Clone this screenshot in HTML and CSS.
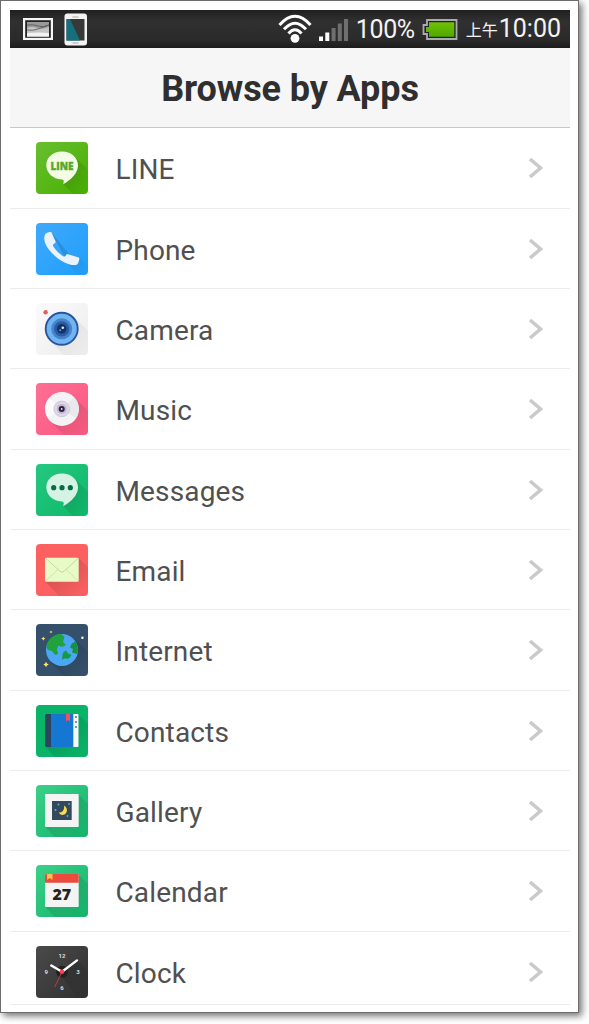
FILE: index.html
```html
<!DOCTYPE html>
<html lang="en">
<head>
    <meta charset="UTF-8">
    <meta name="viewport" content="width=device-width, initial-scale=1.0">
    <title>Browse by Apps</title>
    <link rel="stylesheet" href="styles.css">
</head>
<body>
    <!-- Shared gradients and shapes -->
    <svg class="defs" width="0" height="0">
        <defs>
            <linearGradient id="shade" x1="0" y1="0" x2="1" y2="1">
                <stop offset="0.25" stop-color="#000" stop-opacity="0.15"/>
                <stop offset="0.9" stop-color="#000" stop-opacity="0.01"/>
            </linearGradient>
            <linearGradient id="gGreen" x1="0" y1="0" x2="1" y2="1"><stop offset="0" stop-color="#68be31"/><stop offset="1" stop-color="#48b000"/></linearGradient>
            <linearGradient id="gBlue" x1="0" y1="0" x2="1" y2="1"><stop offset="0" stop-color="#40a9fb"/><stop offset="1" stop-color="#1f9ffb"/></linearGradient>
            <linearGradient id="gWhite" x1="0" y1="0" x2="1" y2="1"><stop offset="0" stop-color="#fbfbfb"/><stop offset="1" stop-color="#ececec"/></linearGradient>
            <linearGradient id="gPink" x1="0" y1="0" x2="1" y2="1"><stop offset="0" stop-color="#ff6f95"/><stop offset="1" stop-color="#fa5880"/></linearGradient>
            <linearGradient id="gMint" x1="0" y1="0" x2="1" y2="1"><stop offset="0" stop-color="#25c780"/><stop offset="1" stop-color="#0db968"/></linearGradient>
            <linearGradient id="gSea" x1="0" y1="0" x2="1" y2="1"><stop offset="0" stop-color="#3bd089"/><stop offset="1" stop-color="#14b46b"/></linearGradient>
            <linearGradient id="gDark" x1="0" y1="0" x2="1" y2="1"><stop offset="0" stop-color="#4a4a4a"/><stop offset="1" stop-color="#303030"/></linearGradient>
            <linearGradient id="gBattery" x1="0" y1="0" x2="0" y2="1"><stop offset="0" stop-color="#6fc008"/><stop offset="1" stop-color="#4fa900"/></linearGradient>
            <path id="bubble" d="M26 9.5C17 9.5 10.3 15.5 10.3 23.2C10.3 31 17 37 25.6 37.4C27.8 37.5 28.2 38.6 27.2 42.2C35 37.6 42 31.2 42 23.4C42 15.6 35 9.5 26 9.5Z"/>
            <path id="bubbleShade" d="M37.5 13.5L52 28V48Q52 52 48 52H37L27.4 42L28 36Z" fill="url(#shade)"/>
            <path id="squareShade" d="M42.5 9.5L52 19V48Q52 52 48 52H19L9.3 42Z" fill="url(#shade)"/>
            <path id="roundShade" d="M38 14L52 28V48Q52 52 48 52H28L14 38Z" fill="url(#shade)"/>
        </defs>
    </svg>

    <div class="phone">
        <div class="status-bar">
            <div class="notifications">
                <svg class="photo-icon" width="30" height="22" viewBox="0 0 30 22">
                    <rect x="1" y="1" width="28" height="20" fill="#222" stroke="#f6f6f6" stroke-width="2.4"/>
                    <rect x="4" y="4" width="22" height="14.5" fill="#999"/>
                    <path d="M4 10Q9 8 14 10T26 9V18.5H4Z" fill="#c4c4c4"/>
                    <path d="M4 15Q15 14 26 15V18.5H4Z" fill="#f2f2f2"/>
                    <path d="M4 7Q10 6 15 8T26 7M4 12Q10 13 15 11T26 7" fill="none" stroke="#555" stroke-width="0.8"/>
                </svg>
                <svg width="24" height="33" viewBox="0 0 24 33">
                    <rect x="0.5" y="0.5" width="22.5" height="32" rx="3" fill="#f3f3f3"/>
                    <rect x="2.5" y="6" width="18" height="21.5" fill="#383838"/>
                    <path d="M2.5 6H6L16 27.5H2.5Z" fill="#14707c"/>
                    <path d="M8.5 4H14.5M8.5 30H14.5" stroke="#aaa" stroke-width="1.2"/>
                </svg>
            </div>
            <div class="indicators">
                <svg width="34" height="30" viewBox="0 0 34 30">
                    <g fill="none" stroke="#fff" stroke-width="3">
                        <path d="M1.5 11Q17 -6.5 32.5 11"/>
                        <path d="M6 15.3Q17 3 28 15.3"/>
                        <path d="M10.5 19.5Q17 12 23.5 19.5"/>
                    </g>
                    <circle cx="17" cy="24.3" r="4.4" fill="#fff"/>
                </svg>
                <svg class="signal" width="30" height="24" viewBox="0 0 30 24">
                    <path d="M0 18.5H4V23H0ZM6.3 14.5H10.3V23H6.3Z" fill="#fff"/>
                    <path d="M12.6 10H16.6V23H12.6ZM18.8 5.5H22.8V23H18.8ZM25 1H29V23H25Z" fill="#6f6f6f"/>
                </svg>
                <span class="percent">100%</span>
                <svg class="battery" width="36" height="21" viewBox="0 0 36 21">
                    <path d="M5 1H34.5V20H5V15H1.5V6H5Z" fill="#222" stroke="#a9acae" stroke-width="1.8"/>
                    <path d="M7 3.3H32.3V17.7H7V13H4V8H7Z" fill="url(#gBattery)"/>
                </svg>
                <span class="ampm">上午</span><span class="time">10:00</span>
            </div>
        </div>

        <h1 class="title">Browse by Apps</h1>

        <ul class="app-list">
            <li class="app">
                <svg class="app-icon" viewBox="0 0 52 52">
                    <rect width="52" height="52" rx="4" fill="url(#gGreen)"/>
                    <use href="#bubbleShade"/>
                    <use href="#bubble" fill="#f3fde6"/>
                    <text x="26" y="27.6" class="line-word">LINE</text>
                </svg>
                <span class="app-name">LINE</span>
                <svg class="chevron" viewBox="0 0 16 22"><path d="M2 2L12.5 11L2 20"/></svg>
            </li>
            <li class="app">
                <svg class="app-icon" viewBox="0 0 52 52">
                    <rect width="52" height="52" rx="4" fill="url(#gBlue)"/>
                    <path d="M15.5 9.5L33 31L43 34.5L52 43V48Q52 52 48 52H43L33 42Z" fill="url(#shade)"/>
                    <path d="M9.3 11C11 9.6 13 9 14.8 9C15.7 9.2 16 10.2 16.3 11.2L19.5 18.5C19.8 19.6 19.3 20 18.4 20.5C17 21.4 16.6 22 17.2 23.3C19.5 27.3 23.5 31 27.3 33.2C28.6 33.9 29.3 33.5 29.8 32.4C30.3 31.2 31 31 32.2 31.3L42 34.3C43.2 34.8 43.5 35.4 43.3 36.5C42.8 38.6 42.2 40.4 40.8 41.7C36 43.2 27.5 40.5 19 33C10.5 25.5 6 17 9.3 11Z" fill="#eaf3fd"/>
                </svg>
                <span class="app-name">Phone</span>
                <svg class="chevron" viewBox="0 0 16 22"><path d="M2 2L12.5 11L2 20"/></svg>
            </li>
            <li class="app">
                <svg class="app-icon" viewBox="0 0 52 52">
                    <rect width="52" height="52" rx="4" fill="url(#gWhite)"/>
                    <use href="#roundShade" opacity="0.5"/>
                    <circle cx="25.7" cy="25.8" r="16" fill="#6fb5f1" stroke="#2c549b" stroke-width="1.9"/>
                    <circle cx="25.7" cy="25.8" r="10.5" fill="#4782cb"/>
                    <circle cx="25.7" cy="25.8" r="7.6" fill="#2a5ba5"/>
                    <circle cx="25.7" cy="25.8" r="4.8" fill="#143363"/>
                    <circle cx="26.8" cy="24.8" r="1.3" fill="#d9efff"/>
                    <circle cx="24.2" cy="27.2" r="0.9" fill="#63aeea"/>
                    <circle cx="9.6" cy="9.2" r="2.2" fill="#ec5a5a"/>
                </svg>
                <span class="app-name">Camera</span>
                <svg class="chevron" viewBox="0 0 16 22"><path d="M2 2L12.5 11L2 20"/></svg>
            </li>
            <li class="app">
                <svg class="app-icon" viewBox="0 0 52 52">
                    <rect width="52" height="52" rx="4" fill="url(#gPink)"/>
                    <use href="#roundShade"/>
                    <circle cx="26" cy="25.9" r="17" fill="#f3f3f5"/>
                    <path d="M26 25.9L13 15A17 17 0 0 0 12 35Z" fill="#fff" opacity="0.6"/>
                    <path d="M26 25.9L38 14A17 17 0 0 1 40 35Z" fill="#dfe0e6" opacity="0.5"/>
                    <circle cx="25.7" cy="25.9" r="7.8" fill="#ded8e6" stroke="#c6c0d0" stroke-width="0.8"/>
                    <circle cx="25.7" cy="25.9" r="5" fill="#c2b8d3"/>
                    <circle cx="25.7" cy="25.9" r="3" fill="#30213f"/>
                    <circle cx="25.7" cy="25.9" r="0.9" fill="#eee"/>
                </svg>
                <span class="app-name">Music</span>
                <svg class="chevron" viewBox="0 0 16 22"><path d="M2 2L12.5 11L2 20"/></svg>
            </li>
            <li class="app">
                <svg class="app-icon" viewBox="0 0 52 52">
                    <rect width="52" height="52" rx="4" fill="url(#gMint)"/>
                    <use href="#bubbleShade"/>
                    <use href="#bubble" fill="#d5f3e5"/>
                    <g fill="#076b43"><circle cx="17.7" cy="23.7" r="2.6"/><circle cx="26" cy="23.7" r="2.6"/><circle cx="34.3" cy="23.7" r="2.6"/></g>
                </svg>
                <span class="app-name">Messages</span>
                <svg class="chevron" viewBox="0 0 16 22"><path d="M2 2L12.5 11L2 20"/></svg>
            </li>
            <li class="app">
                <svg class="app-icon" viewBox="0 0 52 52">
                    <rect width="52" height="52" rx="4" fill="#fc6061"/>
                    <path d="M42.5 14L52 23.5V48Q52 52 48 52H23L9.3 37.5Z" fill="url(#shade)"/>
                    <rect x="9" y="13.8" width="33.7" height="24" rx="1.2" fill="#e8fbc7"/>
                    <path d="M9.5 37L22.5 25M42.2 37L29.5 25" stroke="#d3e6b1" fill="none"/>
                    <path d="M9.8 14.3L24 27.3Q26 29 28 27.3L42 14.3" stroke="#c3daa5" fill="none"/>
                </svg>
                <span class="app-name">Email</span>
                <svg class="chevron" viewBox="0 0 16 22"><path d="M2 2L12.5 11L2 20"/></svg>
            </li>
            <li class="app">
                <svg class="app-icon" viewBox="0 0 52 52">
                    <rect width="52" height="52" rx="4" fill="#34506b"/>
                    <use href="#roundShade"/>
                    <circle cx="26" cy="26" r="16" fill="#4ba6f5"/>
                    <path d="M10.3 23C11.5 15 18 9.8 25.5 10L28.5 13L27 18L30 21L26 23L22.5 21.5L21 25L22 30L19 31L16 27L12 26Z" fill="#20a33f"/>
                    <path d="M39 17.3L35.5 20L34 23.5L37 25L36 28.5L41 30Q43.5 23 39 17.3Z" fill="#15923d"/>
                    <path d="M27.5 28L30 26.5L32 29.5L35.5 31L33 34.5L28 34.5L26 36L26.5 31Z" fill="#159a3f"/>
                    <path d="M7.3 12.4L8 13.9L9.5 14.6L8 15.3L7.3 16.8L6.6 15.3L5.1 14.6L6.6 13.9ZM10 37.8L10.9 39.6L12.7 40.5L10.9 41.4L10 43.2L9.1 41.4L7.3 40.5L9.1 39.6ZM15 6.6L15.5 7.6L16.5 8.1L15.5 8.6L15 9.6L14.5 8.6L13.5 8.1L14.5 7.6Z" fill="#ffe873"/>
                    <circle cx="46.4" cy="13.8" r="1.2" fill="#fff"/>
                </svg>
                <span class="app-name">Internet</span>
                <svg class="chevron" viewBox="0 0 16 22"><path d="M2 2L12.5 11L2 20"/></svg>
            </li>
            <li class="app">
                <svg class="app-icon" viewBox="0 0 52 52">
                    <rect width="52" height="52" rx="4" fill="#09b367"/>
                    <use href="#squareShade"/>
                    <rect x="9" y="9" width="33.5" height="33" rx="1" fill="#f5f7fa"/>
                    <path d="M10 9H15V42H10Q9 42 9 41V10Q9 9 10 9Z" fill="#2b4460"/>
                    <rect x="15" y="9" width="22.3" height="33" fill="#1677d2"/>
                    <path d="M30 9H34V16.5L32 15L30 16.5Z" fill="#f0525b"/>
                    <path d="M39.2 12h1.6M39.2 17h1.6M39.2 22h1.6" stroke="#34506b" stroke-width="1.4"/>
                </svg>
                <span class="app-name">Contacts</span>
                <svg class="chevron" viewBox="0 0 16 22"><path d="M2 2L12.5 11L2 20"/></svg>
            </li>
            <li class="app">
                <svg class="app-icon" viewBox="0 0 52 52">
                    <rect width="52" height="52" rx="4" fill="url(#gSea)"/>
                    <use href="#squareShade"/>
                    <rect x="9" y="9" width="33.7" height="33" rx="1" fill="#f4f4f5"/>
                    <rect x="16" y="16" width="19.7" height="19" fill="#34495e"/>
                    <path d="M28 20.5C32 22.5 32 28.6 27.6 29.8C25.6 30.3 23.7 29.4 22.8 27.6C26.5 27.8 28.8 24.6 28 20.5Z" fill="#fcdc4d"/>
                    <g fill="#53b3c6"><circle cx="22.5" cy="19.5" r="1"/><circle cx="19.5" cy="25" r="1"/><circle cx="33" cy="19" r="0.9"/><circle cx="31.5" cy="31" r="0.9"/></g>
                </svg>
                <span class="app-name">Gallery</span>
                <svg class="chevron" viewBox="0 0 16 22"><path d="M2 2L12.5 11L2 20"/></svg>
            </li>
            <li class="app">
                <svg class="app-icon" viewBox="0 0 52 52">
                    <rect width="52" height="52" rx="4" fill="url(#gSea)"/>
                    <use href="#squareShade"/>
                    <rect x="9" y="9" width="33.7" height="33" rx="1" fill="#f4f4f5"/>
                    <path d="M10 9H41.7Q42.7 9 42.7 10V17.7H9V10Q9 9 10 9Z" fill="#ea4b3d"/>
                    <path d="M11 9H16.5V15L13.7 13L11 15Z" fill="#fdc04a"/>
                    <text x="25.8" y="35.4" class="day">27</text>
                </svg>
                <span class="app-name">Calendar</span>
                <svg class="chevron" viewBox="0 0 16 22"><path d="M2 2L12.5 11L2 20"/></svg>
            </li>
            <li class="app">
                <svg class="app-icon" viewBox="0 0 52 52">
                    <rect width="52" height="52" rx="4" fill="url(#gDark)"/>
                    <path d="M41 14L52 25V48Q52 52 48 52H42L24 28Z" fill="url(#shade)"/>
                    <circle cx="26" cy="25.8" r="6" fill="#222"/>
                    <g class="numeral"><text x="26" y="11.6">12</text><text x="42" y="28">3</text><text x="26" y="43.6">6</text><text x="10.3" y="28">9</text></g>
                    <path d="M26 25.8L15.3 19.5M26 25.8L41 14.4" stroke="#fff" stroke-width="2.4" stroke-linecap="round"/>
                    <path d="M26 25.8L18.7 41" stroke="#dc3c45" stroke-width="0.8"/>
                    <circle cx="26" cy="25.8" r="2.3" fill="#fa4450"/>
                </svg>
                <span class="app-name">Clock</span>
                <svg class="chevron" viewBox="0 0 16 22"><path d="M2 2L12.5 11L2 20"/></svg>
            </li>
        </ul>
    </div>
</body>
</html>
```
FILE: styles.css
```css
* {
    box-sizing: border-box;
}

body {
    margin: 0;
    height: 1024px;
    overflow: hidden;
    background-color: #fff;
    font-family: Roboto, "Noto Sans CJK TC", sans-serif;
}

.defs {
    display: block;
}

.phone {
    width: 579px;
    height: 1013px;
    padding: 9px 8px 8px 9px;
    background-color: #fff;
    border: 1px solid #6b6d6f;
    border-right-width: 1.5px;
    box-shadow: 3px 3px 7px rgba(0, 0, 0, 0.55);
}

.status-bar {
    display: flex;
    justify-content: space-between;
    align-items: center;
    width: 560px;
    height: 38px;
    padding: 0 9px 0 13px;
    background: linear-gradient(#202020, #303030 30%, #2a2a2a 80%, #1c1c1c);
    color: #f4f4f4;
}

.notifications {
    display: flex;
    align-items: center;
    gap: 11px;
}

.indicators {
    display: flex;
    align-items: center;
    line-height: 38px;
}

.signal {
    margin-left: 7px;
    margin-top: 2px;
}

.percent {
    margin-left: 7px;
    padding-top: 2px;
    font-size: 25px;
    letter-spacing: -0.4px;
}

.battery {
    margin-left: 7px;
}

.ampm {
    margin-left: 8px;
    padding-top: 4px;
    font-size: 16px;
}

.time {
    margin-left: 1px;
    font-size: 25px;
}

.title {
    width: 560px;
    height: 80px;
    margin: 0;
    background-color: #f6f6f6;
    border-bottom: 1px solid #c6c8c8;
    color: #2f2f2f;
    font-size: 36px;
    font-weight: bold;
    letter-spacing: -0.1px;
    line-height: 83px;
    text-align: center;
}

.app-list {
    width: 560px;
    margin: 0;
    padding: 0.4px 0 0;
    list-style: none;
}

.app {
    display: flex;
    align-items: center;
    height: 80.35px;
    padding: 14px 26px 13.35px 26px;
    border-bottom: 1px solid #ececec;
}

.app:last-child {
    height: 73px;
    padding-bottom: 6px;
}

.app-icon {
    width: 52px;
    height: 52px;
}

.app-name {
    flex-grow: 1;
    margin-left: 27.5px;
    color: #505050;
    font-size: 28px;
    letter-spacing: 0.15px;
    line-height: 52px;
    padding-top: 4px;
}

.chevron {
    width: 16px;
    height: 22px;
    fill: none;
    stroke: #cacaca;
    stroke-width: 3.6;
}

.line-word {
    fill: #55a92a;
    stroke: #55a92a;
    stroke-width: 0.3px;
    font-family: "Open Sans", sans-serif;
    font-size: 10px;
    font-weight: 800;
    text-anchor: middle;
}

.day {
    fill: #222;
    font-family: "Open Sans", sans-serif;
    font-size: 16px;
    font-weight: 800;
    text-anchor: middle;
}

.numeral {
    fill: #ddd;
    font-size: 6px;
    font-weight: bold;
    text-anchor: middle;
}
```
